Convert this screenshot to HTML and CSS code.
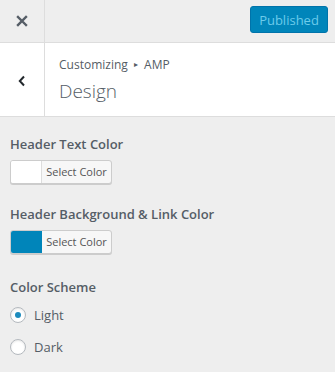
FILE: index.html
```html
<!DOCTYPE html>
<html>
<head>
<meta charset="utf-8">
<link rel="stylesheet" href="styles.css">
</head>
<body>
<div class="panel">
  <div class="topbar">
    <div class="close">
      <svg width="12" height="12" viewBox="0 0 12 12"><path d="M2 2L10 10M10 2L2 10" stroke="#555d66" stroke-width="2.4" stroke-linecap="square"/></svg>
    </div>
    <div class="spacer"></div>
    <button class="publish">Published</button>
  </div>
  <div class="section-head">
    <div class="back">
      <svg width="10" height="12" viewBox="0 0 10 12"><path d="M7 1.5L2.8 6L7 10.5" fill="none" stroke="#23282d" stroke-width="2"/></svg>
    </div>
    <div class="titles">
      <div class="crumb">Customizing <span class="arrow">▸</span> AMP</div>
      <div class="title">Design</div>
    </div>
  </div>
  <div class="controls">
    <div class="control">
      <div class="label">Header Text Color</div>
      <div class="picker"><span class="swatch"></span><span class="pick-text">Select Color</span></div>
    </div>
    <div class="control control-last-picker">
      <div class="label">Header Background &amp; Link Color</div>
      <div class="picker"><span class="swatch blue"></span><span class="pick-text">Select Color</span></div>
    </div>
    <div class="control">
      <div class="label label-radio">Color Scheme</div>
      <label class="radio"><span class="circle checked"></span><span>Light</span></label>
      <label class="radio"><span class="circle"></span><span>Dark</span></label>
    </div>
  </div>
</div>
</body>
</html>
```
FILE: styles.css
```css
html, body {
  margin: 0;
  padding: 0;
  background: #eeeeee;
}
body {
  font-family: "Open Sans", "Noto Sans", sans-serif;
  color: #555d66;
  width: 335px;
  height: 372px;
  overflow: hidden;
}
.topbar {
  display: flex;
  align-items: center;
  height: 42px;
  border-bottom: 1px solid #dddddd;
}
.close {
  width: 45px;
  height: 42px;
  border-right: 1px solid #dddddd;
  display: flex;
  align-items: center;
  justify-content: center;
  box-sizing: border-box;
}
.spacer { flex: 1; }
.publish {
  width: 78px;
  height: 27px;
  margin: 0 7px 3px 0;
  background: #0085ba;
  border: 1px solid #0073aa;
  border-radius: 3px;
  color: #6ccbea;
  font-family: inherit;
  font-size: 13px;
  padding: 0;
}
.section-head {
  display: flex;
  background: #ffffff;
  height: 73px;
  border-bottom: 1px solid #dddddd;
}
.back {
  width: 45px;
  border-right: 1px solid #dddddd;
  display: flex;
  align-items: center;
  justify-content: center;
  box-sizing: border-box;
  padding-top: 2px;
}
.titles {
  padding: 12px 0 0 14px;
}
.crumb {
  font-size: 12px;
  line-height: 20px;
  color: #555d66;
}
.arrow {
  font-size: 8px;
  position: relative;
  top: -2px;
  margin: 0 3px;
}
.title {
  font-size: 19px;
  font-weight: 300;
  line-height: 28px;
  margin-top: 1px;
  color: #555d66;
}
.controls {
  padding: 16px 10px 0 10px;
}
.control {
  margin-bottom: 15px;
}
.control-last-picker {
  margin-bottom: 18px;
}
.label {
  font-size: 13px;
  font-weight: 600;
  line-height: 22px;
  margin-bottom: 5px;
}
.label-radio {
  margin-bottom: 1px;
}
.picker {
  display: inline-flex;
  width: 102px;
  height: 24px;
  box-sizing: border-box;
  border: 1px solid #cccccc;
  border-radius: 3px;
  background: #f7f7f7;
  box-shadow: 0 1px 0 #cccccc;
  overflow: hidden;
}
.swatch {
  width: 30px;
  background: #ffffff;
  border-right: 1px solid #dddddd;
}
.swatch.blue {
  background: #0085ba;
  border-right-color: #0085ba;
}
.pick-text {
  flex: 1;
  font-size: 11px;
  line-height: 22px;
  text-align: center;
  color: #555555;
}
.radio {
  display: flex;
  align-items: center;
  height: 32px;
  font-size: 13px;
}
.circle {
  width: 16px;
  height: 16px;
  box-sizing: border-box;
  border: 1px solid #b4b9be;
  border-radius: 50%;
  background: #ffffff;
  box-shadow: inset 0 1px 2px rgba(0,0,0,0.1);
  margin-right: 8px;
  display: flex;
  align-items: center;
  justify-content: center;
}
.circle.checked::after {
  content: "";
  width: 6px;
  height: 6px;
  border-radius: 50%;
  background: #1e8cbe;
}
```
